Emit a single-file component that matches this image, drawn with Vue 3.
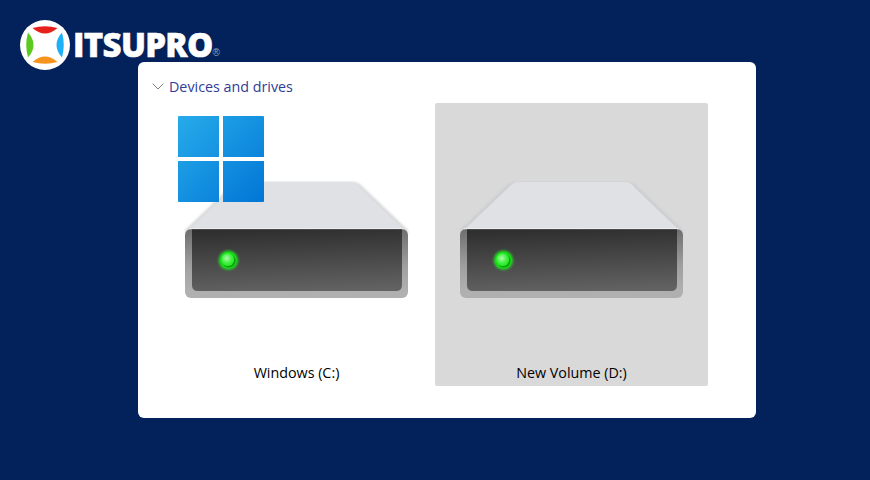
<template>
  <div class="page">
    <div class="logo">
      <svg class="logo-mark" width="50" height="50" viewBox="0 0 50 50">
        <circle cx="25" cy="25" r="25" fill="#fff" />
        <path d="M12.5 8 Q25 4.5 37.5 8 C33 12 29 13.5 25 13.5 C21 13.5 17 12 12.5 8Z" fill="#e8201c" />
        <path d="M12.5 42 Q25 45.5 37.5 42 C33 38 29 36.5 25 36.5 C21 36.5 17 38 12.5 42Z" fill="#f7941d" />
        <path d="M8 12.5 Q4.5 25 8 37.5 C12 33 13.5 29 13.5 25 C13.5 21 12 17 8 12.5Z" fill="#5cc91e" />
        <path d="M42 12.5 Q45.5 25 42 37.5 C38 33 36.5 29 36.5 25 C36.5 21 38 17 42 12.5Z" fill="#1cb0f6" />
      </svg>
      <span class="logo-text">ITSUPRO</span>
      <span class="logo-reg">®</span>
    </div>

    <div class="card">
      <div class="section-title">
        <svg width="12" height="7" viewBox="0 0 12 7">
          <path d="M0.7 0.7 L6 6 L11.3 0.7" fill="none" stroke="#7f7f7f" stroke-width="1" />
        </svg>
        <span>Devices and drives</span>
      </div>

      <div class="drives">
        <div
          v-for="drive in drives"
          :key="drive.label"
          class="tile"
          :class="{ selected: drive.selected }"
        >
          <svg class="drive-icon" width="273" height="230" viewBox="0 0 273 230">
            <defs>
              <linearGradient :id="`edge-${drive.id}`" x1="0" y1="0" x2="0" y2="1">
                <stop offset="0" stop-color="#6e6e6e" />
                <stop offset="0.55" stop-color="#a0a0a0" />
                <stop offset="0.9" stop-color="#b0b0b0" />
              </linearGradient>
              <linearGradient :id="`face-${drive.id}`" x1="0.45" y1="0" x2="0.55" y2="1">
                <stop offset="0" stop-color="#2f2f2f" />
                <stop offset="1" stop-color="#626262" />
              </linearGradient>
              <linearGradient :id="`win-${drive.id}`" gradientUnits="userSpaceOnUse" x1="18" y1="13" x2="104" y2="99">
                <stop offset="0" stop-color="#27abea" />
                <stop offset="1" stop-color="#0176d6" />
              </linearGradient>
              <radialGradient :id="`led-${drive.id}`" cx="0.42" cy="0.4" r="0.6">
                <stop offset="0" stop-color="#b4f8b0" />
                <stop offset="0.6" stop-color="#44f244" />
                <stop offset="1" stop-color="#26e826" />
              </radialGradient>
              <filter :id="`soft-${drive.id}`" x="-20%" y="-20%" width="140%" height="140%">
                <feGaussianBlur stdDeviation="1.2" />
              </filter>
            </defs>

            <path
              d="M25 127 L71 83 Q75 79 80 79 L193 79 Q198 79 202 83 L248 127 L248 130 L25 130Z"
              fill="#c9cacd"
              opacity="0.7"
              :filter="`url(#soft-${drive.id})`"
            />
            <path
              d="M29 127 L73 85 Q78 79 83 79 L191 79 Q196 79 200 85 L244 127 L244 130 L29 130Z"
              fill="#e0e1e5"
            />
            <rect x="25" y="126" width="223" height="69" rx="6" :fill="`url(#edge-${drive.id})`" />
            <path
              d="M32 126 L242 126 L242 182 Q242 188 236 188 L38 188 Q32 188 32 182Z"
              :fill="`url(#face-${drive.id})`"
            />
            <rect x="29" y="125" width="215" height="1.2" fill="#f1f1f3" opacity="0.7" />

            <circle cx="68.4" cy="157.2" r="10" fill="#22e622" opacity="0.75" :filter="`url(#soft-${drive.id})`" />
            <circle cx="68.4" cy="157.2" r="8.4" fill="#14e014" />
            <circle cx="68.9" cy="157.7" r="6.8" fill="#0b9f0b" />
            <circle cx="67.8" cy="156.6" r="6.4" :fill="`url(#led-${drive.id})`" />

            <g v-if="drive.system" :fill="`url(#win-${drive.id})`">
              <path d="M19 13 H59 V54 H18 V14 Q18 13 19 13Z" />
              <path d="M63 13 H103 Q104 13 104 14 V54 H63Z" />
              <path d="M18 58 H59 V99 H19 Q18 99 18 98Z" />
              <path d="M63 58 H104 V98 Q104 99 103 99 H63Z" />
            </g>
          </svg>
          <div class="drive-label">{{ drive.label }}</div>
        </div>
      </div>
    </div>
  </div>
</template>

<script setup>
const drives = [
  { id: 'c', label: 'Windows (C:)', system: true, selected: false },
  { id: 'd', label: 'New Volume (D:)', system: false, selected: true },
]
</script>

<style>
html,
body {
  margin: 0;
  background: #03215a;
}
</style>

<style scoped>
.page {
  position: relative;
  box-sizing: border-box;
  width: 870px;
  height: 480px;
  padding: 62px 114px 62px 138px;
  background: #03215a;
  overflow: hidden;
}

.logo {
  position: absolute;
  top: 20px;
  left: 20px;
  display: flex;
  align-items: center;
  height: 50px;
}

.logo-mark {
  flex: none;
}

.logo-text {
  margin-left: 3px;
  font-family: "Open Sans", sans-serif;
  font-size: 33px;
  font-weight: 800;
  letter-spacing: -0.7px;
  -webkit-text-stroke: 0.5px #fff;
  color: #fff;
  line-height: 50px;
}

.logo-reg {
  align-self: flex-end;
  margin: 0 0 12px 0;
  font-family: "Liberation Sans", sans-serif;
  font-size: 10px;
  line-height: 10px;
  color: #9aa5bd;
}

.card {
  box-sizing: border-box;
  height: 356px;
  background: #fff;
  border-radius: 6px;
}

.section-title {
  box-sizing: border-box;
  display: flex;
  align-items: center;
  gap: 5px;
  height: 41px;
  padding: 8px 0 0 14px;
  font-family: "Open Sans", sans-serif;
  font-size: 14.3px;
  color: #2f3d96;
}

.drives {
  display: grid;
  grid-template-columns: 273px 273px;
  gap: 2px;
  padding-left: 22px;
}

.tile {
  height: 283px;
  border-radius: 2px;
  text-align: center;
}

.tile.selected {
  background: #d9d9d9;
}

.drive-icon {
  display: block;
}

.drive-label {
  margin-top: 30px;
  font-family: "Open Sans", sans-serif;
  font-size: 14.3px;
  line-height: 20px;
  color: #000;
}
</style>
